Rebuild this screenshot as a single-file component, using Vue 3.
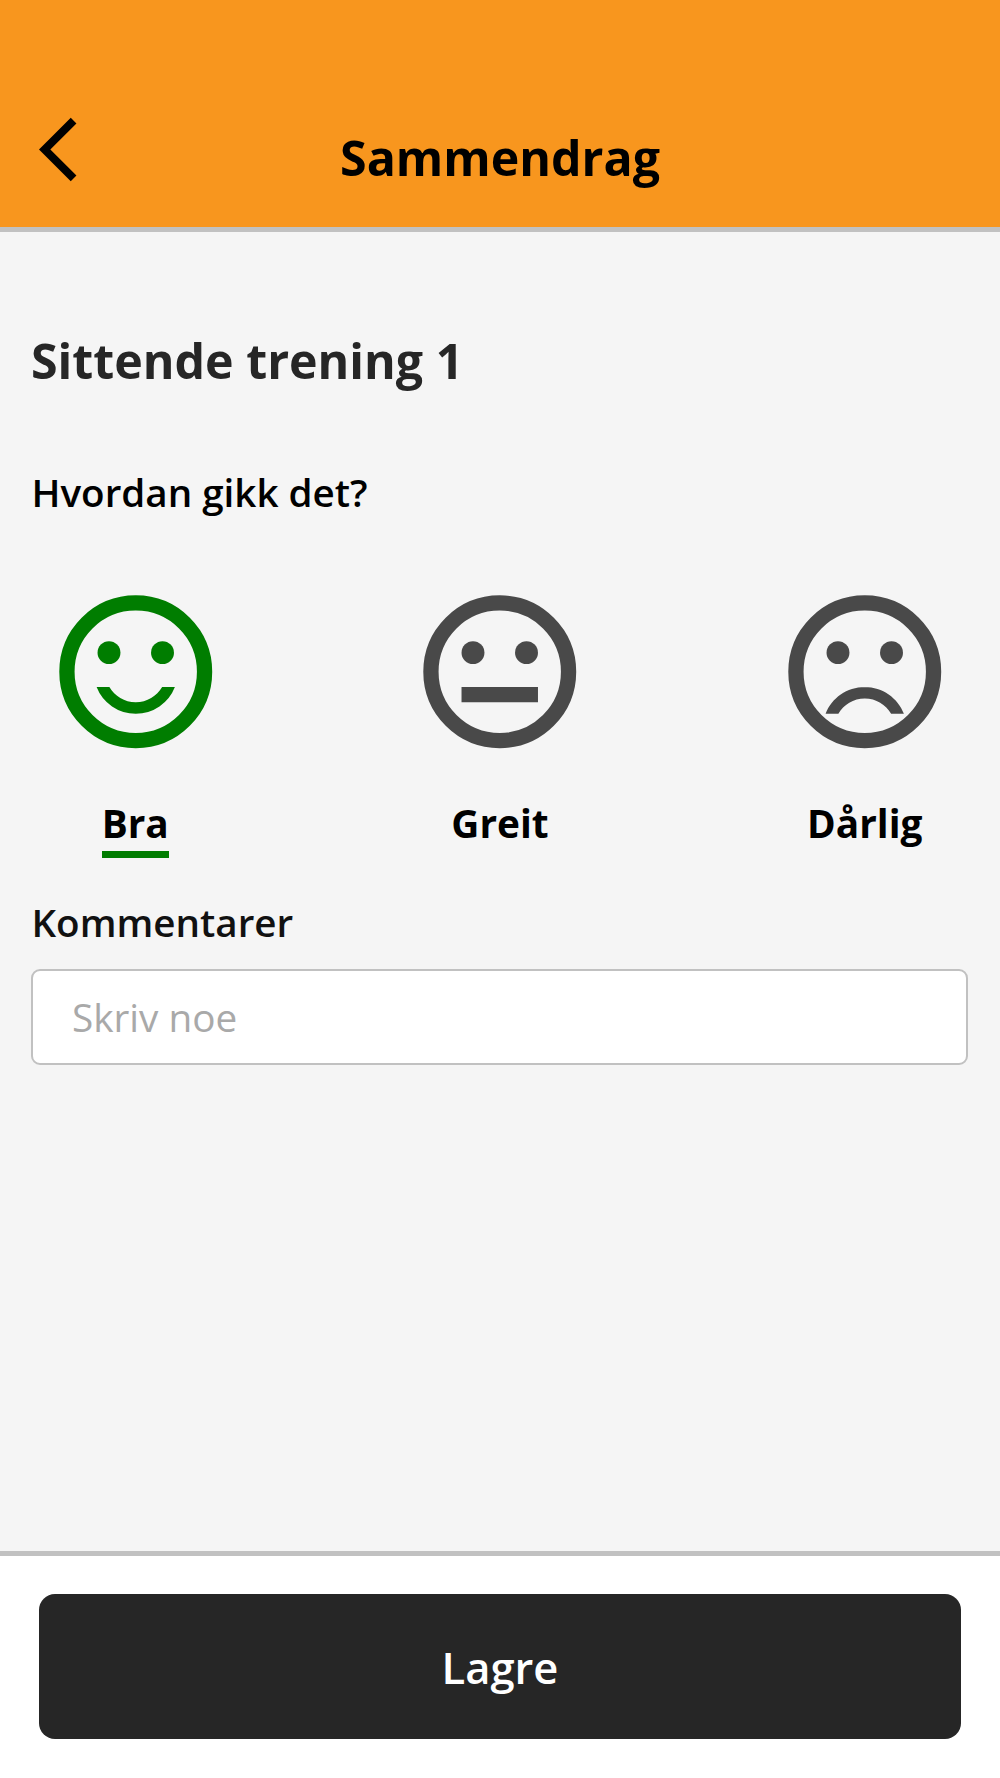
<script setup>
import { ref } from 'vue'

const faces = [
  {
    id: 'good',
    label: 'Bra',
    mouth: 'M12 16c-1.48 0-2.75-.81-3.45-2H6.88a5.495 5.495 0 0 0 10.24 0h-1.67c-.7 1.19-1.97 2-3.45 2z',
  },
  { id: 'ok', label: 'Greit', mouth: 'M7 14h10v2H7z' },
  {
    id: 'bad',
    label: 'Dårlig',
    mouth: 'M12 14c-2.33 0-4.32 1.45-5.12 3.5h1.67c.69-1.19 1.97-2 3.45-2s2.75.81 3.45 2h1.67c-.8-2.05-2.79-3.5-5.12-3.5z',
  },
]
const selected = ref('good')
const comment = ref('')
</script>

<template>
  <div class="screen">
    <header class="header">
      <button class="back" aria-label="Tilbake">
        <svg viewBox="0 0 24 24"><path d="M11.67 3.87L9.9 2.1 0 12l9.9 9.9 1.77-1.77L3.54 12z" /></svg>
      </button>
      <h1 class="header-title">Sammendrag</h1>
    </header>

    <main class="content">
      <h2 class="title">Sittende trening 1</h2>
      <p class="question">Hvordan gikk det?</p>
      <div class="faces">
        <button
          v-for="face in faces"
          :key="face.id"
          class="face"
          :class="{ selected: selected === face.id }"
          @click="selected = face.id"
        >
          <svg class="face-icon" viewBox="0 0 24 24">
            <circle class="ring" cx="12" cy="12" r="9" />
            <circle cx="8.5" cy="9.5" r="1.5" />
            <circle cx="15.5" cy="9.5" r="1.5" />
            <path :d="face.mouth" />
          </svg>
          <span class="face-label">{{ face.label }}</span>
        </button>
      </div>
      <label class="comment-label" for="comment">Kommentarer</label>
      <input id="comment" v-model="comment" class="comment" type="text" placeholder="Skriv noe" />
    </main>

    <footer class="footer">
      <button class="save">Lagre</button>
    </footer>
  </div>
</template>

<style>
body {
  margin: 0;
}
</style>

<style scoped>
.screen {
  display: flex;
  flex-direction: column;
  height: 1778px;
  background: #f5f5f5;
  color: #000;
  font-family: 'Open Sans', sans-serif;
}

button {
  margin: 0;
  padding: 0;
  border: 0;
  background: none;
  color: inherit;
  font-family: inherit;
}

.header {
  display: grid;
  grid-template-columns: 77px 1fr 77px;
  align-items: start;
  box-sizing: border-box;
  height: 232px;
  padding: 111px 39px 0;
  border-bottom: 5px solid #c1c1c1;
  background: #f8961e;
}

.back {
  height: 77px;
}

.back svg {
  display: block;
  width: 77px;
  height: 77px;
}

.header-title {
  margin: 15px 0 0;
  font-size: 48.3px;
  font-weight: 700;
  line-height: 63px;
  text-align: center;
}

.content {
  display: flex;
  flex: 1;
  flex-direction: column;
  padding: 96px 31px 0;
}

.title {
  margin: 0;
  color: #262626;
  font-size: 48.3px;
  font-weight: 700;
  line-height: 64px;
}

.question {
  margin: 72px 0 0 0.5px;
  font-size: 38.6px;
  font-weight: 600;
  line-height: 56px;
}

.faces {
  display: flex;
  justify-content: space-between;
  margin: 59.5px 0.5px 0;
}

.face {
  display: flex;
  flex-direction: column;
  align-items: center;
  width: 207.5px;
  color: #000;
}

.face-icon {
  width: 183.5px;
  height: 183.5px;
  fill: #494949;
}

.ring {
  fill: none;
  stroke: #494949;
  stroke-width: 2;
}

.selected .face-icon {
  fill: #007d00;
}

.selected .ring {
  stroke: #007d00;
}

.face-label {
  margin-top: 33px;
  border-bottom: 7px solid transparent;
  font-size: 38.8px;
  font-weight: 700;
  line-height: 55px;
}

.selected .face-label {
  border-bottom-color: #007d00;
}

.comment-label {
  margin-top: 37px;
  margin-left: 0.5px;
  color: #111;
  font-size: 38.6px;
  font-weight: 600;
  line-height: 54px;
}

.comment {
  box-sizing: border-box;
  width: 937px;
  height: 96px;
  margin-top: 20px;
  padding: 0 39px 1px;
  border: 2px solid #c1c1c1;
  border-radius: 9px;
  background: #fff;
  font-family: inherit;
  font-size: 38.7px;
}

.comment::placeholder {
  color: #a9a9a9;
  opacity: 1;
}

.footer {
  box-sizing: border-box;
  height: 227px;
  padding: 38px 39px 0;
  border-top: 5px solid #c1c1c1;
  background: #fff;
}

.save {
  display: block;
  width: 100%;
  height: 145px;
  padding-top: 2px;
  border-radius: 16px;
  background: #262626;
  color: #fff;
  font-size: 43.5px;
  font-weight: 600;
}
</style>
